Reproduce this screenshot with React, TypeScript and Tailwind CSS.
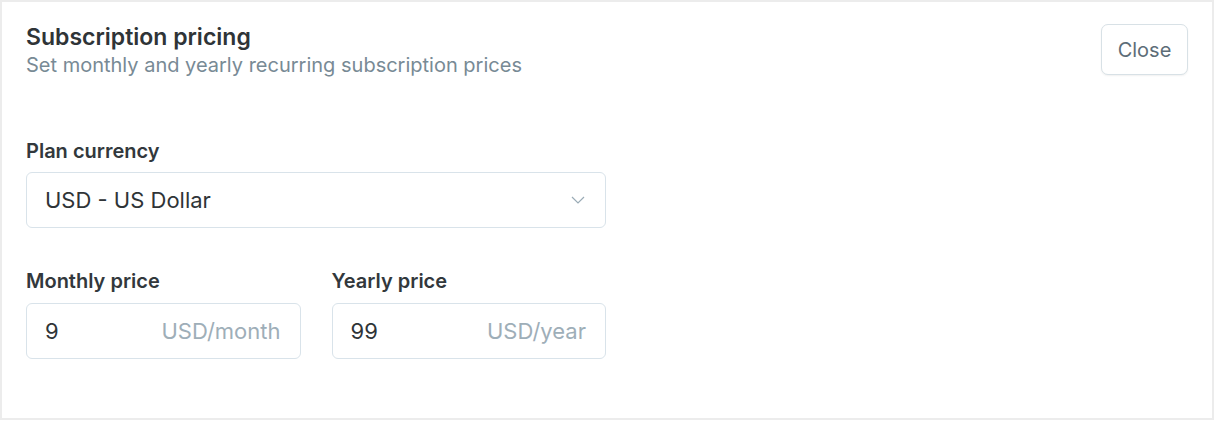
import React from "react";

export default function App() {
  return (
    <div className="w-[1215px] h-[421px] bg-white" style={{ fontFamily: "Inter, 'Noto Sans', sans-serif" }}>
      <div className="w-[1214px] h-[420px] border-2 border-[#ececec] bg-white px-[24px] pt-[20px]">
        <div className="flex items-start justify-between">
          <div>
            <h1 className="text-[23px] leading-[30px] font-semibold text-[#2f3437]">Subscription pricing</h1>
            <p className="text-[20px] leading-[26px] text-[#788a95]">Set monthly and yearly recurring subscription prices</p>
          </div>
          <button className="mt-[2px] h-[51px] w-[87px] rounded-[7px] border border-[#d8e1e6] bg-white text-[20px] text-[#5d6d78] shadow-[0_1px_2px_rgba(0,0,0,0.06)]">
            Close
          </button>
        </div>

        <div className="mt-[61px] w-[580px]">
          <label className="block text-[20px] leading-[24px] font-semibold text-[#32383c]">Plan currency</label>
          <div className="mt-[9px] flex h-[56px] items-center justify-between rounded-[6px] border border-[#d9e3ea] bg-white pl-[18px] pr-[20px]">
            <span className="text-[22px] text-[#2f3437]">USD - US Dollar</span>
            <svg width="14" height="8" viewBox="0 0 14 8" fill="none">
              <path d="M1 1l6 6 6-6" stroke="#9aabb6" strokeWidth="1.2" />
            </svg>
          </div>

          <div className="mt-[41px] grid grid-cols-2 gap-[31px]">
            <div>
              <label className="block text-[20px] leading-[24px] font-semibold text-[#32383c]">Monthly price</label>
              <div className="mt-[10px] flex h-[56px] items-center justify-between rounded-[6px] border border-[#d9e3ea] bg-white pl-[18px] pr-[19px]">
                <span className="text-[22px] text-[#2f3437]">9</span>
                <span className="text-[22px] text-[#9eaeb8]">USD/month</span>
              </div>
            </div>
            <div>
              <label className="block text-[20px] leading-[24px] font-semibold text-[#32383c]">Yearly price</label>
              <div className="mt-[10px] flex h-[56px] items-center justify-between rounded-[6px] border border-[#d9e3ea] bg-white pl-[18px] pr-[19px]">
                <span className="text-[22px] text-[#2f3437]">99</span>
                <span className="text-[22px] text-[#9eaeb8]">USD/year</span>
              </div>
            </div>
          </div>
        </div>
      </div>
    </div>
  );
}
